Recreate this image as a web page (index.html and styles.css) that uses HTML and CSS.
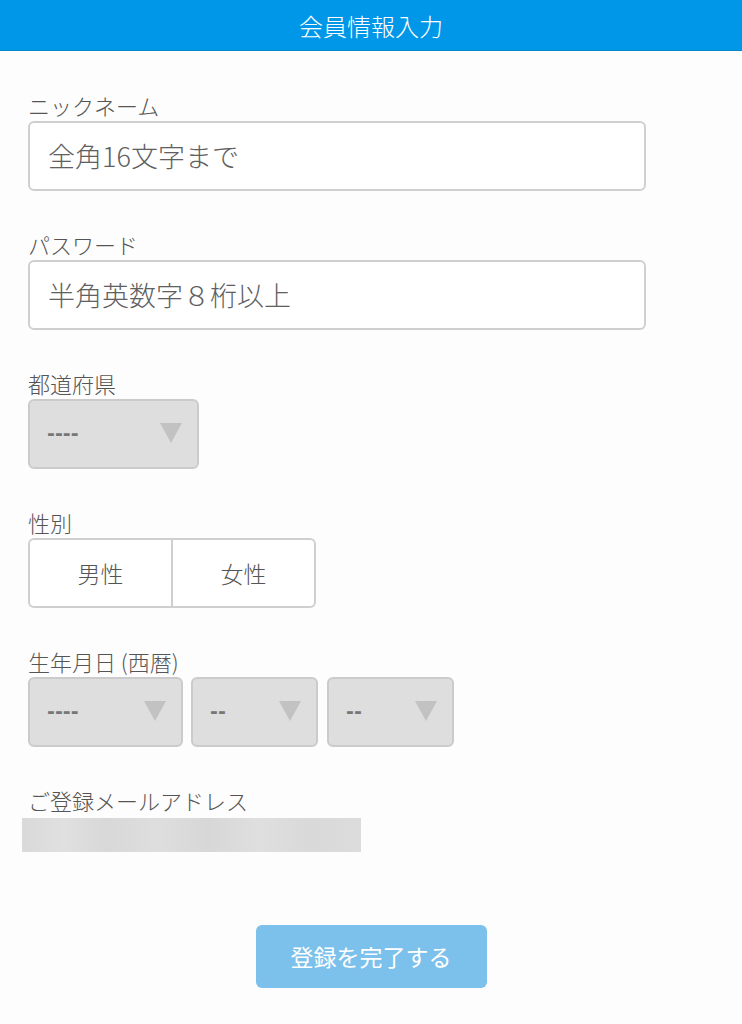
FILE: index.html
```html
<!DOCTYPE html>
<html lang="ja">
<head>
<meta charset="utf-8">
<title>会員情報入力</title>
<link rel="stylesheet" href="styles.css">
</head>
<body>
<header class="topbar">会員情報入力</header>
<main class="form">
  <div class="group">
    <div class="label">ニックネーム</div>
    <div class="input">全角16文字まで</div>
  </div>
  <div class="group">
    <div class="label">パスワード</div>
    <div class="input">半角英数字８桁以上</div>
  </div>
  <div class="group">
    <div class="label">都道府県</div>
    <div class="select w-pref"><span class="dash">----</span><span class="tri"></span></div>
  </div>
  <div class="group">
    <div class="label">性別</div>
    <div class="seg">
      <div class="seg-item">男性</div>
      <div class="seg-item">女性</div>
    </div>
  </div>
  <div class="group">
    <div class="label">生年月日 (西暦)</div>
    <div class="row">
      <div class="select w-year"><span class="dash">----</span><span class="tri"></span></div>
      <div class="select w-md"><span class="dash">--</span><span class="tri"></span></div>
      <div class="select w-md"><span class="dash">--</span><span class="tri"></span></div>
    </div>
  </div>
  <div class="group email">
    <div class="label">ご登録メールアドレス</div>
    <div class="mailbar"></div>
  </div>
  <div class="actions">
    <div class="btn">登録を完了する</div>
  </div>
</main>
</body>
</html>
```

FILE: styles.css
```css
html, body {
  margin: 0;
  padding: 0;
}
body {
  background: #fdfdfd;
  font-family: "Noto Sans CJK JP", "Noto Sans", sans-serif;
  font-weight: 300;
  color: #555;
  width: 742px;
  height: 1024px;
  overflow: hidden;
}
.topbar {
  height: 51px;
  background: #0097e8;
  border-bottom: 1px solid #0a86c8;
  box-sizing: border-box;
  color: #fff;
  font-size: 24px;
  line-height: 52px;
  text-align: center;
}
.form {
  padding: 41px 28px 0;
}
.group {
  margin-bottom: 40px;
}
.label {
  font-size: 22px;
  line-height: 26px;
  color: #555;
  margin-bottom: 3px;
}
.input {
  width: 618px;
  height: 70px;
  box-sizing: border-box;
  border: 2px solid #cfcfcf;
  border-radius: 6px;
  background: #fff;
  padding-left: 18px;
  font-size: 27px;
  line-height: 66px;
  color: #606060;
}
.row {
  display: flex;
  gap: 8px;
}
.select {
  height: 70px;
  box-sizing: border-box;
  border: 2px solid #cbcbcb;
  border-radius: 6px;
  background: #dedede;
  display: flex;
  align-items: center;
  justify-content: space-between;
  padding: 0 15px 0 17px;
}
.w-pref { width: 171px; }
.w-year { width: 155px; }
.w-md { width: 127px; }
.w-md + .w-md { margin-left: 1px; }
.dash {
  font-size: 19px;
  font-weight: 700;
  color: #777;
  font-family: "DejaVu Sans", sans-serif;
  margin-top: -2px;
}
.tri {
  width: 0;
  height: 0;
  border-left: 11.5px solid transparent;
  border-right: 11.5px solid transparent;
  border-top: 20px solid #c2c2c2;
  margin-top: -2px;
}
.seg {
  display: flex;
  width: 288px;
  height: 70px;
  box-sizing: border-box;
  border: 2px solid #cfcfcf;
  border-radius: 6px;
  background: #fff;
}
.seg-item {
  flex: 1;
  text-align: center;
  font-size: 23px;
  line-height: 66px;
  color: #555;
}
.seg-item + .seg-item {
  border-left: 2px solid #cfcfcf;
}
.email {
  margin-bottom: 0;
}
.mailbar {
  margin-left: -6px;
  margin-top: 5px;
  width: 339px;
  height: 34px;
  background: linear-gradient(90deg, #d9d9d9 0%, #e0e0e0 12%, #d8d8d8 25%, #dedede 40%, #d7d7d7 55%, #dfdfdf 70%, #d9d9d9 85%, #dcdcdc 100%);
}
.actions {
  display: flex;
  justify-content: center;
  margin-top: 73px;
  margin-left: -28px;
  width: 742px;
}
.btn {
  width: 231px;
  height: 63px;
  background: #7cc1eb;
  border-radius: 6px;
  color: #fff;
  font-size: 23px;
  font-weight: 400;
  line-height: 63px;
  text-align: center;
}
```
